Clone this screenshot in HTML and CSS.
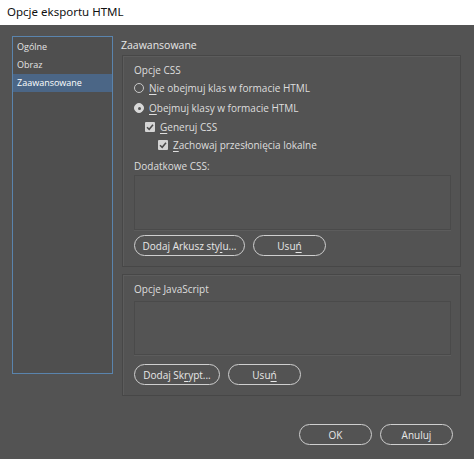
FILE: index.html
```html
<!DOCTYPE html>
<html lang="pl">
<head>
    <meta charset="UTF-8">
    <meta name="viewport" content="width=device-width, initial-scale=1.0">
    <title>Opcje eksportu HTML</title>
    <link rel="stylesheet" href="styles.css">
</head>
<body>
    <div class="titlebar">Opcje eksportu HTML</div>
    <div class="main">
        <ul class="nav-list">
            <li>Ogólne</li>
            <li>Obraz</li>
            <li class="selected">Zaawansowane</li>
        </ul>
        <div class="content">
            <div class="heading">Zaawansowane</div>

            <div class="group group-css">
                <div class="group-title">Opcje CSS</div>
                <label class="option"><span class="radio"></span><span><u>N</u>ie obejmuj klas w formacie HTML</span></label>
                <label class="option"><span class="radio checked"></span><span><u>O</u>bejmuj klasy w formacie HTML</span></label>
                <label class="option check level-1"><span class="checkbox"><svg viewBox="0 0 10 10"><path d="M2 5.2 L4.2 7.3 L8 2.8" /></svg></span><span><u>G</u>eneruj CSS</span></label>
                <label class="option check level-2"><span class="checkbox"><svg viewBox="0 0 10 10"><path d="M2 5.2 L4.2 7.3 L8 2.8" /></svg></span><span><u>Z</u>achowaj przesłonięcia lokalne</span></label>
                <div class="field-label">Dodatkowe CSS:</div>
                <div class="listbox"></div>
                <div class="button-row">
                    <button class="btn btn-wide">Dodaj Arkusz sty<u>l</u>u...</button>
                    <button class="btn">Usu<u>ń</u></button>
                </div>
            </div>

            <div class="group group-js">
                <div class="group-title">Opcje JavaScript</div>
                <div class="listbox"></div>
                <div class="button-row">
                    <button class="btn btn-script">Dodaj Sk<u>r</u>ypt...</button>
                    <button class="btn">Usu<u>ń</u></button>
                </div>
            </div>
        </div>
    </div>
    <div class="footer">
        <button class="btn">OK</button>
        <button class="btn">Anuluj</button>
    </div>
</body>
</html>
```

FILE: styles.css
```css
body {
    margin: 0;
    height: 459px;
    background-color: #535353;
    color: #dedede;
    font-family: 'Open Sans', 'Noto Sans', sans-serif;
    font-size: 10px;
    overflow: hidden;
}

.titlebar {
    height: 25px;
    line-height: 24px;
    padding-left: 7px;
    background-color: #ffffff;
    color: #111111;
    font-family: 'Noto Sans', sans-serif;
    font-size: 11.5px;
}

.main {
    display: flex;
    align-items: flex-start;
    padding: 11px 0 0 12px;
}

.nav-list {
    list-style: none;
    margin: 0;
    padding: 1px 0 0 0;
    width: 99px;
    height: 335px;
    border: 1px solid #5a84ad;
    background-color: #4f4f4f;
    font-size: 9px;
}

.nav-list li {
    height: 18px;
    line-height: 18px;
    padding-left: 4px;
    color: #e4e4e4;
}

.nav-list li.selected {
    background-color: #4b6686;
    color: #ffffff;
}

.content {
    width: 340px;
    margin-left: 8px;
}

.heading {
    height: 19px;
    line-height: 18px;
    font-size: 10.5px;
    color: #e6e6e6;
}

.group {
    margin-left: 1px;
    width: 326px;
    padding: 6px 0 10px 11px;
    border: 1px solid #474747;
    box-shadow: inset 1px 1px 0 #5c5c5c;
}

.group-js {
    margin-top: 7px;
    padding-bottom: 10px;
}

.group-title {
    height: 16px;
    line-height: 16px;
    font-size: 10px;
}

.option {
    display: flex;
    align-items: center;
    height: 20px;
}

.option.check {
    height: 18px;
}

.level-1 {
    padding-left: 11px;
}

.level-2 {
    padding-left: 24px;
}

.option u,
.btn u {
    text-decoration-thickness: 1px;
    text-underline-offset: 2px;
}

.radio {
    width: 8px;
    height: 8px;
    border: 1.2px solid #c8c8c8;
    border-radius: 50%;
    margin-right: 5px;
    box-sizing: content-box;
}

.radio.checked {
    background-color: #d8d8d8;
    border-color: #d8d8d8;
    position: relative;
}

.radio.checked::after {
    content: '';
    position: absolute;
    left: 2.5px;
    top: 2.5px;
    width: 3px;
    height: 3px;
    border-radius: 50%;
    background-color: #555555;
}

.checkbox {
    width: 10px;
    height: 10px;
    background-color: #d4d4d4;
    border-radius: 1px;
    margin-right: 5px;
    display: flex;
}

.checkbox svg {
    width: 10px;
    height: 10px;
}

.checkbox path {
    fill: none;
    stroke: #4a4a4a;
    stroke-width: 1.5;
}

.field-label {
    height: 18px;
    line-height: 18px;
    margin-top: 3px;
}

.listbox {
    width: 315px;
    height: 52px;
    border: 1px solid #4a4a4a;
    background-color: #545454;
    box-shadow: 0 1px 0 #5c5c5c;
}

.group-css .listbox {
    height: 53px;
}

.group-js .listbox {
    margin-top: 4px;
}

.button-row {
    display: flex;
    gap: 8px;
    margin-top: 5px;
}

.group-js .button-row {
    margin-top: 9px;
}

.btn {
    width: 73px;
    height: 21px;
    padding: 0;
    border: 1.5px solid #cfcfcf;
    border-radius: 11px;
    background: transparent;
    color: #e8e8e8;
    font-family: 'Open Sans', 'Noto Sans', sans-serif;
    font-size: 10px;
    cursor: pointer;
}

.btn-wide {
    width: 111px;
}

.btn-script {
    width: 86px;
}

.footer {
    display: flex;
    justify-content: flex-end;
    gap: 8px;
    padding-right: 21px;
    margin-top: 28px;
}
```
